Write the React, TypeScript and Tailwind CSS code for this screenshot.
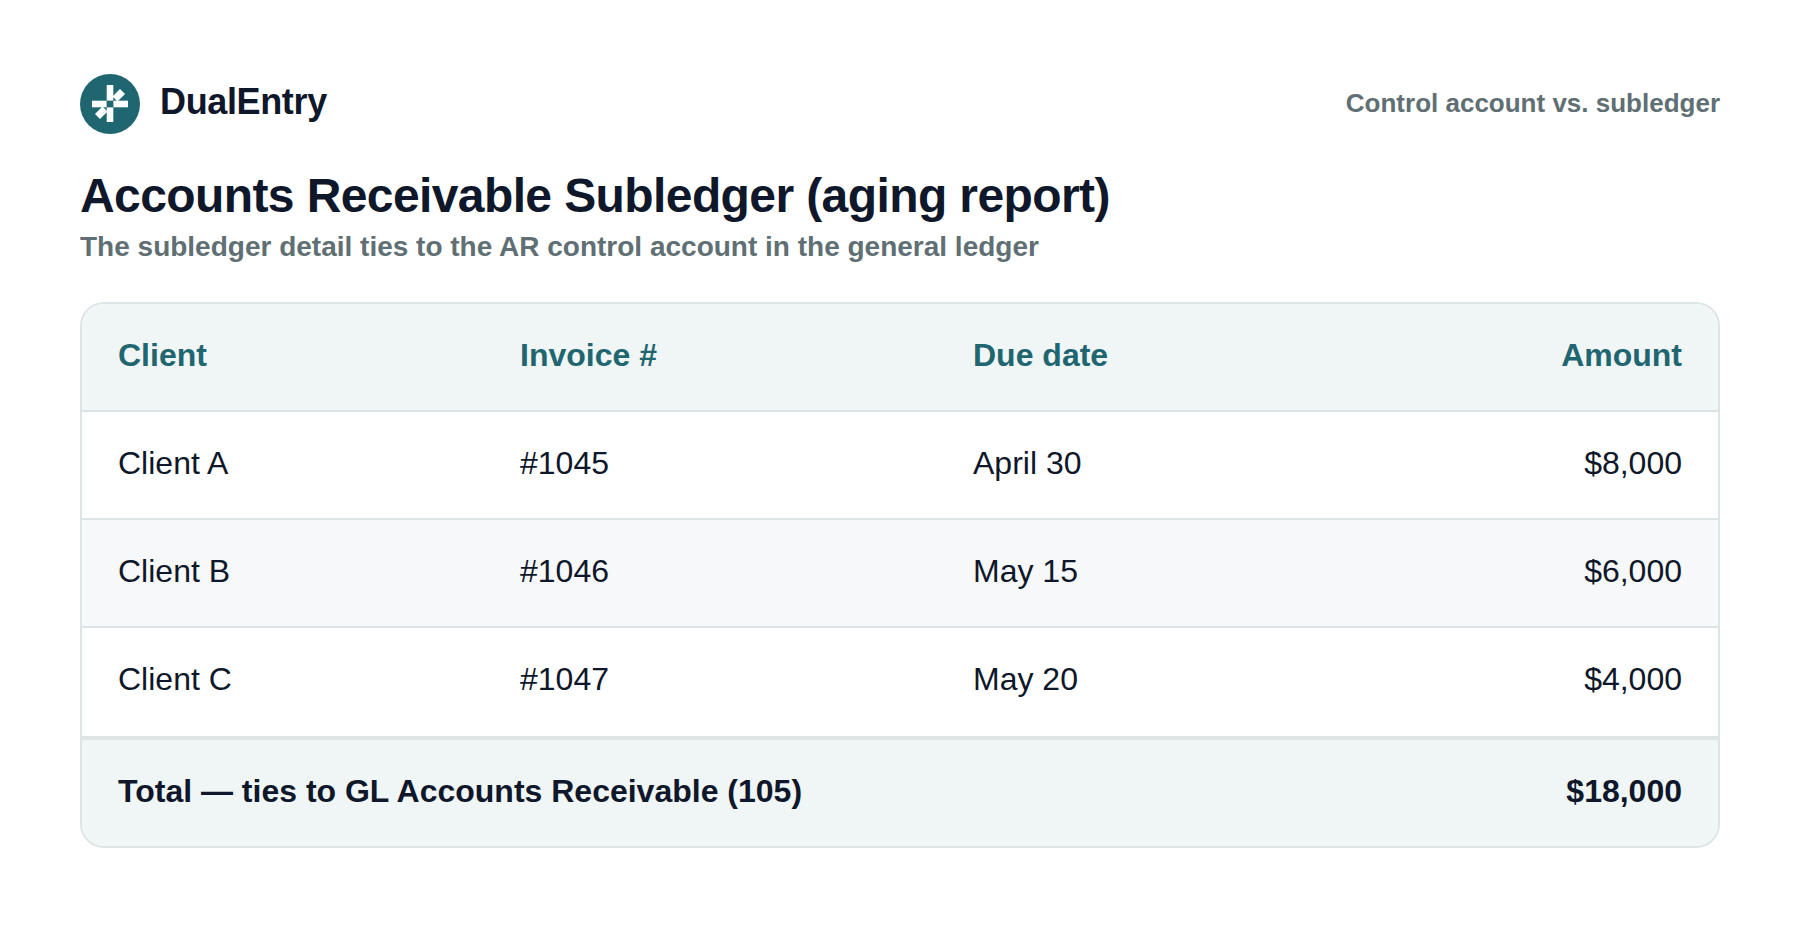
const rows = [
  { client: "Client A", invoice: "#1045", due: "April 30", amount: "$8,000", alt: false },
  { client: "Client B", invoice: "#1046", due: "May 15", amount: "$6,000", alt: true },
  { client: "Client C", invoice: "#1047", due: "May 20", amount: "$4,000", alt: false },
];

const gridCols = "grid grid-cols-[402px_453px_1fr_auto] items-center px-[36px]";

const Logo = () => (
  <svg viewBox="0 0 60 60" className="h-[60px] w-[60px]">
    <circle cx="30" cy="30" r="30" fill="#1f6670" />
    <g fill="#ffffff">
      <rect x="26.7" y="11" width="6.6" height="15.6" />
      <rect x="26.7" y="33.4" width="6.6" height="14.6" />
      <rect x="12" y="26.7" width="14.6" height="6.6" />
      <rect x="33.4" y="26.7" width="14.6" height="6.6" />
    </g>
    <g stroke="#ffffff" strokeWidth="7">
      <line x1="35" y1="25" x2="42.5" y2="17.5" />
      <line x1="25" y1="35" x2="17.5" y2="42.5" />
    </g>
  </svg>
);

export default function App() {
  return (
    <div className="h-[928px] w-[1800px] bg-white px-[80px] pt-[74px] font-['Liberation_Sans',sans-serif] text-[#0f172a]">
      <div className="flex items-center justify-between">
        <div className="flex items-center gap-[20px]">
          <Logo />
          <span className="pb-[4px] text-[36px] font-bold tracking-[-0.36px]">DualEntry</span>
        </div>
        <span className="pb-[2px] text-[26px] font-semibold text-[#5f6f73]">Control account vs. subledger</span>
      </div>

      <h1 className="mt-[34px] text-[48px] font-bold leading-[56px] tracking-[-0.6px]">
        Accounts Receivable Subledger (aging report)
      </h1>
      <p className="mt-[5px] text-[28px] font-semibold leading-[36px] text-[#5f6f73]">
        The subledger detail ties to the AR control account in the general ledger
      </p>

      <div className="mt-[37px] overflow-hidden rounded-[24px] border-2 border-[#dde4e6] text-[32px]">
        <div className={`${gridCols} h-[108px] border-b-2 border-[#dde4e6] bg-[#f0f5f6] pb-[5px] font-bold text-[#1f6670]`}>
          <span>Client</span>
          <span>Invoice #</span>
          <span>Due date</span>
          <span className="text-right">Amount</span>
        </div>
        {rows.map((row, i) => (
          <div
            key={row.client}
            className={`${gridCols} h-[108px] border-b-2 pb-[5px] ${i < 2 ? "border-[#dde4e6]" : "border-transparent"} ${row.alt ? "bg-[#f6f8f9]" : "bg-white"}`}
          >
            <span>{row.client}</span>
            <span>{row.invoice}</span>
            <span>{row.due}</span>
            <span className="text-right">{row.amount}</span>
          </div>
        ))}
        <div className="flex h-[110px] items-center justify-between border-t-4 border-[#dde4e6] bg-[#f0f5f6] px-[36px] pb-[5px] font-bold">
          <span>Total — ties to GL Accounts Receivable (105)</span>
          <span>$18,000</span>
        </div>
      </div>
    </div>
  );
}
